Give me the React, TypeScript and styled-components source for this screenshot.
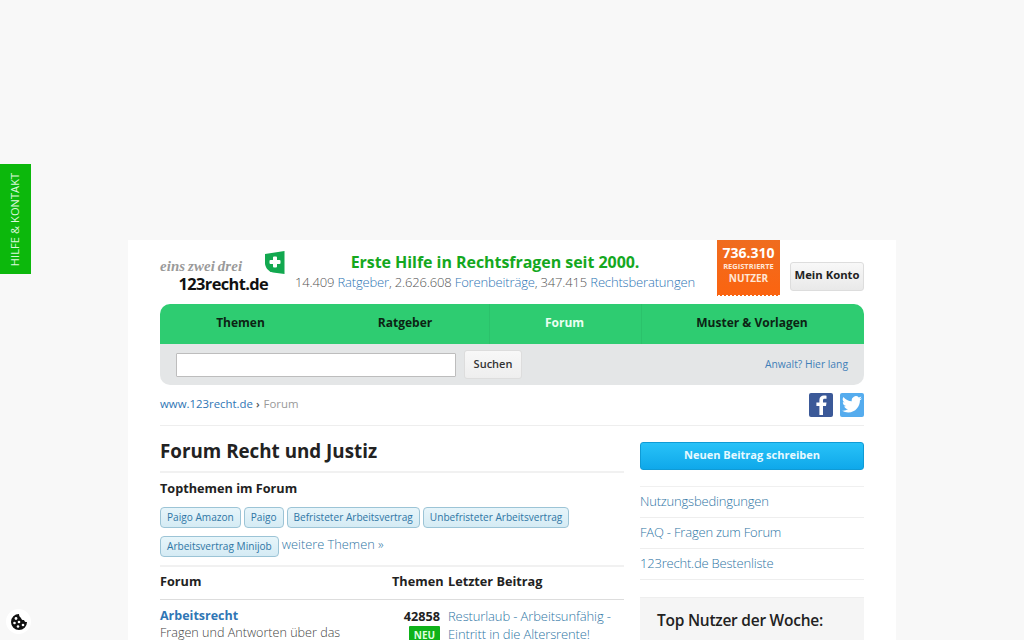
import React from "react";
import styled, { createGlobalStyle } from "styled-components";

const Global = createGlobalStyle`
  html, body { margin: 0; padding: 0; height: 640px; overflow: hidden; background: #f8f8f8; }
  body { font-family: "Open Sans", "Liberation Sans", sans-serif; color: #222; }
  * { box-sizing: border-box; }
  a { text-decoration: none; color: inherit; }
`;

const Page = styled.div`
  width: 768px;
  margin: 240px 0 0 128px;
  padding: 0 32px;
  background: #fff;
  height: 400px;
  overflow: hidden;
`;
const Header = styled.header`
  display: flex;
  height: 64px;
  align-items: flex-start;
`;
const Logo = styled.div`
  width: 125px;
  height: 64px;
  padding-top: 12px;
  position: relative;
`;
const LogoTop = styled.div`
  font: italic 700 14.9px/15px "Liberation Serif", serif;
  color: #9a9a9a;
  letter-spacing: 0.1px;
  word-spacing: -1px;
  margin-top: 7px;
`;
const LogoMain = styled.div`
  font: 700 16.4px/17px "Open Sans", sans-serif;
  color: #111;
  letter-spacing: -0.6px;
  margin: 1px 0 0 18.5px;
`;
const Shield = styled.svg`
  position: absolute;
  left: 104px;
  top: 11px;
`;
const Claim = styled.div`
  width: 420px;
  padding: 12px 0 0 0;
  text-align: center;
`;
const ClaimTitle = styled.div`
  font-size: 16px;
  line-height: 20px;
  font-weight: 700;
  letter-spacing: -0.05px;
  color: #14a81e;
`;
const ClaimStats = styled.div`
  font-size: 13px;
  font-weight: 300;
  line-height: 20px;
  letter-spacing: -0.16px;
  color: #555;
  white-space: nowrap;
`;
const StatLink = styled.a`
  color: #2f76b5;
`;
const Badge = styled.div`
  width: 63px;
  height: 56px;
  margin-left: 12px;
  background: linear-gradient(#ef6c1f, #fb6410);
  color: #fff;
  text-align: center;
  font-weight: 700;
  padding-top: 4px;
  position: relative;
`;
const Teeth = styled.div`
  position: absolute;
  left: 0;
  right: 0;
  bottom: 0;
  height: 2px;
  background: radial-gradient(circle at 2px 2px, #fff 1px, transparent 1.3px) 0 0 / 4px 2px repeat-x;
`;
const BadgeNum = styled.div`
  font-size: 14px;
  line-height: 17px;
`;
const BadgeSmall = styled.div`
  font-size: 7.5px;
  line-height: 11px;
  color: #ffe6d6;
`;
const BadgeUser = styled.div`
  font-size: 10px;
  line-height: 13px;
  color: #ffe6d6;
`;
const Account = styled.a`
  width: 74px;
  height: 29px;
  margin: 22px 0 0 10px;
  border: 1px solid #ddd;
  border-radius: 3px;
  background: linear-gradient(#f8f8f8, #e9e9e9);
  font-size: 11.3px;
  font-weight: 700;
  line-height: 24px;
  text-align: center;
  color: #222;
  white-space: nowrap;
`;
const Nav = styled.nav`
  display: grid;
  grid-template-columns: 161px 168px 152px 223px;
  height: 40px;
  background: #2ecc71;
  border-radius: 10px 10px 0 0;
`;
const NavItem = styled.a<{ $active?: boolean; $sep?: boolean }>`
  font-size: 12px;
  font-weight: 700;
  line-height: 38px;
  text-align: center;
  color: ${(p) => (p.$active ? "#eafff2" : "#0c2414")};
  border-left: ${(p) => (p.$sep ? "1px solid #2bc26b" : "0")};
  padding-right: ${(p) => (p.$sep ? "2px" : "0")};
`;
const SearchBar = styled.div`
  display: flex;
  align-items: center;
  height: 41px;
  padding: 0 16px;
  background: #e4e6e7;
  border-radius: 0 0 10px 10px;
`;
const SearchInput = styled.input`
  width: 280px;
  height: 24px;
  padding: 0 4px;
  border: 1px solid #bdbdbd;
  background: #fff;
  border-radius: 1px;
`;
const SearchButton = styled.button`
  width: 58px;
  height: 29px;
  margin-left: 8px;
  padding: 0 0 2px;
  border: 1px solid #ddd;
  border-radius: 3px;
  background: linear-gradient(#f8f8f8, #eee);
  font: 600 11px "Open Sans", sans-serif;
  color: #333;
`;
const Lawyer = styled.a`
  margin-left: auto;
  padding-bottom: 2px;
  font-size: 10.3px;
  color: #3f7fb8;
`;
const Crumbs = styled.div`
  display: flex;
  align-items: center;
  height: 41px;
  border-bottom: 1px solid #eee;
  font-size: 11.4px;
`;
const CrumbText = styled.div`
  padding-bottom: 3px;
`;
const CrumbLink = styled.a`
  color: #2f76b5;
`;
const CrumbSep = styled.span`
  color: #555;
  margin: 0 4px 0 3px;
  font-size: 11px;
  font-weight: 600;
`;
const CrumbNow = styled.span`
  color: #999;
`;
const Social = styled.div`
  margin-left: auto;
  display: flex;
  gap: 7px;
  margin-bottom: 1px;
`;
const SocialIcon = styled.a<{ $bg: string }>`
  width: 24px;
  height: 24px;
  border-radius: 2px;
  background: ${(p) => p.$bg};
  display: flex;
  align-items: center;
  justify-content: center;
`;
const Columns = styled.div`
  display: grid;
  grid-template-columns: 464px 224px;
  gap: 16px;
`;
const Main = styled.main``;
const Title = styled.h1`
  margin: 0;
  height: 47px;
  padding-top: 12px;
  border-bottom: 2px solid #f1f1f1;
  font-size: 18.8px;
  font-weight: 700;
  line-height: 27px;
  color: #222;
`;
const SubTitle = styled.h2`
  margin: 6px 0 0;
  font-size: 12.7px;
  font-weight: 700;
  line-height: 18px;
  color: #222;
`;
const Tags = styled.div`
  display: flex;
  flex-wrap: wrap;
  align-items: flex-start;
  gap: 8px 3px;
  margin-top: 10px;
  padding-bottom: 8px;
  border-bottom: 2px solid #f1f1f1;
`;
const Tag = styled.a`
  height: 21px;
  padding: 0 6px;
  border: 1px solid #9cc4d6;
  border-radius: 4px;
  background: linear-gradient(#e7f5fa, #d5ebf4);
  font-size: 10.1px;
  line-height: 18px;
  color: #2f76a5;
  white-space: nowrap;
`;
const More = styled.a`
  font-size: 12.8px;
  line-height: 16px;
  font-weight: 300;
  color: #2f76a5;
`;
const ForumHead = styled.div`
  display: grid;
  grid-template-columns: 228px 52px 1fr;
  column-gap: 4px;
  height: 33px;
  border-bottom: 1px solid #ddd;
  font-size: 12.7px;
  font-weight: 700;
  line-height: 28px;
  color: #222;
`;
const ForumRow = styled.div`
  display: grid;
  grid-template-columns: 220px 52px 176px;
  column-gap: 8px;
  padding-top: 7px;
`;
const ForumName = styled.a`
  display: block;
  font-size: 12.5px;
  font-weight: 700;
  line-height: 17px;
  color: #2f76b5;
`;
const ForumText = styled.div`
  font-size: 12.6px;
  line-height: 17px;
  color: #444;
  font-weight: 300;
  white-space: nowrap;
`;
const Count = styled.div`
  text-align: right;
  font-size: 12.7px;
  font-weight: 700;
  line-height: 18px;
`;
const New = styled.span`
  display: inline-block;
  width: 31px;
  height: 18px;
  margin-top: 1px;
  background: #0fb21a;
  border-radius: 1px;
  color: #dfffdf;
  font-size: 10px;
  line-height: 18px;
  text-align: center;
`;
const Latest = styled.a`
  display: block;
  font-size: 13px;
  font-weight: 300;
  line-height: 18px;
  letter-spacing: -0.12px;
  color: #2f76a5;
`;
const Side = styled.aside`
  padding-top: 16px;
`;
const Write = styled.a`
  display: block;
  height: 28px;
  border: 1px solid #0f9bd6;
  border-radius: 3px;
  background: linear-gradient(#28c2f8, #0fa8ea);
  color: #e8f9ff;
  font-size: 11px;
  font-weight: 700;
  line-height: 24px;
  text-align: center;
`;
const SideLinks = styled.div`
  margin-top: 16px;
  border-top: 1px solid #f0f0f0;
`;
const SideLink = styled.a`
  display: block;
  height: 31px;
  border-bottom: 1px solid #eee;
  font-size: 13px;
  font-weight: 300;
  letter-spacing: -0.2px;
  line-height: 28px;
  color: #2f76a5;
`;
const TopBox = styled.div`
  margin-top: 17px;
  height: 80px;
  padding: 10px 17px;
  background: #f5f5f5;
  border-top: 1px solid #eee;
`;
const TopTitle = styled.div`
  font-size: 15.5px;
  font-weight: 600;
  line-height: 24px;
  letter-spacing: -0.25px;
  color: #222;
`;
const HelpTab = styled.a`
  position: fixed;
  left: 0;
  top: 164px;
  width: 31px;
  height: 110px;
  background: #0cb80c;
  color: #dcf7dc;
  font-size: 11px;
  letter-spacing: 0.1px;
  display: flex;
  align-items: center;
  justify-content: center;
  padding-right: 2px;
`;
const HelpText = styled.span`
  transform: rotate(-90deg);
  white-space: nowrap;
`;
const Cookie = styled.div`
  position: fixed;
  left: 6px;
  top: 609px;
  width: 25px;
  height: 25px;
  border-radius: 50%;
  background: #fff;
  display: flex;
  align-items: center;
  justify-content: center;
`;

export default function App() {
  return (
    <>
      <Global />
      <HelpTab><HelpText>HILFE &amp; KONTAKT</HelpText></HelpTab>
      <Cookie>
        <svg width="18" height="18" viewBox="0 0 18 18">
          <path d="M9 1a8 8 0 1 0 8 8c-1.500.3-2.600-.5-3-2-1.500.3-2.800-.6-3-2.300C9.700 4.200 9 2.800 9 1z" fill="#111" />
          <circle cx="6" cy="5.500" r="1.400" fill="#fff" />
          <circle cx="4.500" cy="10" r="1.300" fill="#fff" />
          <circle cx="9" cy="9" r="1.300" fill="#fff" />
          <circle cx="8" cy="13.500" r="1.300" fill="#fff" />
          <circle cx="13" cy="12" r="1.300" fill="#fff" />
        </svg>
      </Cookie>
      <Page>
        <Header>
          <Logo>
            <LogoTop>eins zwei drei</LogoTop>
            <LogoMain>123recht.de</LogoMain>
            <Shield width="21" height="23" viewBox="0 0 21 23">
              <path d="M1 3 L20.500 0 V23 L9 21.500 C4 20.500 1 16 1 12 Z" fill="#12a84f" />
              <path d="M9 6.500a1 1 0 0 1 1-1h2a1 1 0 0 1 1 1V9h2.500a1 1 0 0 1 1 1v2a1 1 0 0 1-1 1H13v2.500a1 1 0 0 1-1 1h-2a1 1 0 0 1-1-1V13H6.500a1 1 0 0 1-1-1v-2a1 1 0 0 1 1-1H9z" fill="#fff" />
            </Shield>
          </Logo>
          <Claim>
            <ClaimTitle>Erste Hilfe in Rechtsfragen seit 2000.</ClaimTitle>
            <ClaimStats>
              14.409 <StatLink>Ratgeber</StatLink>, 2.626.608 <StatLink>Forenbeiträge</StatLink>, 347.415 <StatLink>Rechtsberatungen</StatLink>
            </ClaimStats>
          </Claim>
          <Badge>
            <BadgeNum>736.310</BadgeNum>
            <BadgeSmall>REGISTRIERTE</BadgeSmall>
            <BadgeUser>NUTZER</BadgeUser>
            <Teeth />
          </Badge>
          <Account>Mein Konto</Account>
        </Header>
        <Nav>
          <NavItem>Themen</NavItem>
          <NavItem>Ratgeber</NavItem>
          <NavItem $active $sep>Forum</NavItem>
          <NavItem $sep>Muster &amp; Vorlagen</NavItem>
        </Nav>
        <SearchBar>
          <SearchInput />
          <SearchButton>Suchen</SearchButton>
          <Lawyer>Anwalt? Hier lang</Lawyer>
        </SearchBar>
        <Crumbs>
          <CrumbText>
            <CrumbLink>www.123recht.de</CrumbLink>
            <CrumbSep>›</CrumbSep>
            <CrumbNow>Forum</CrumbNow>
          </CrumbText>
          <Social>
            <SocialIcon $bg="#3b5998">
              <svg width="14" height="20" viewBox="0 0 14 20">
                <path d="M9 20v-9h3l.5-3.500H9V5.500C9 4.400 9.400 3.800 10.700 3.800h1.800V.7C12 .6 11 .5 9.900.5 7.300.5 5.400 2.100 5.400 5v2.500H2.400V11h3v9z" fill="#fff" />
              </svg>
            </SocialIcon>
            <SocialIcon $bg="#55acee">
              <svg width="20" height="17" viewBox="0 0 24 20">
                <path d="M24 2.400a10 10 0 0 1-2.800.8A5 5 0 0 0 23.300.500a10 10 0 0 1-3.100 1.200A4.900 4.900 0 0 0 11.800 6.200 14 14 0 0 1 1.700 1a4.900 4.900 0 0 0 1.500 6.600 4.900 4.900 0 0 1-2.200-.6v.1a4.900 4.900 0 0 0 3.900 4.800 5 5 0 0 1-2.200.1 4.900 4.900 0 0 0 4.600 3.400A9.900 9.900 0 0 1 0 17.400 14 14 0 0 0 7.500 19.600c9 0 14-7.500 14-14v-.6A10 10 0 0 0 24 2.400z" fill="#fff" />
              </svg>
            </SocialIcon>
          </Social>
        </Crumbs>
        <Columns>
          <Main>
            <Title>Forum Recht und Justiz</Title>
            <SubTitle>Topthemen im Forum</SubTitle>
            <Tags>
              <Tag>Paigo Amazon</Tag>
              <Tag>Paigo</Tag>
              <Tag>Befristeter Arbeitsvertrag</Tag>
              <Tag>Unbefristeter Arbeitsvertrag</Tag>
              <Tag>Arbeitsvertrag Minijob</Tag>
              <More>weitere Themen »</More>
            </Tags>
            <ForumHead>
              <span>Forum</span>
              <span>Themen</span>
              <span>Letzter Beitrag</span>
            </ForumHead>
            <ForumRow>
              <div>
                <ForumName>Arbeitsrecht</ForumName>
                <ForumText>Fragen und Antworten über das</ForumText>
              </div>
              <Count>
                42858
                <br />
                <New>NEU</New>
              </Count>
              <Latest>Resturlaub - Arbeitsunfähig - Eintritt in die Altersrente!</Latest>
            </ForumRow>
          </Main>
          <Side>
            <Write>Neuen Beitrag schreiben</Write>
            <SideLinks>
              <SideLink>Nutzungsbedingungen</SideLink>
              <SideLink>FAQ - Fragen zum Forum</SideLink>
              <SideLink>123recht.de Bestenliste</SideLink>
            </SideLinks>
            <TopBox>
              <TopTitle>Top Nutzer der Woche:</TopTitle>
            </TopBox>
          </Side>
        </Columns>
      </Page>
    </>
  );
}
